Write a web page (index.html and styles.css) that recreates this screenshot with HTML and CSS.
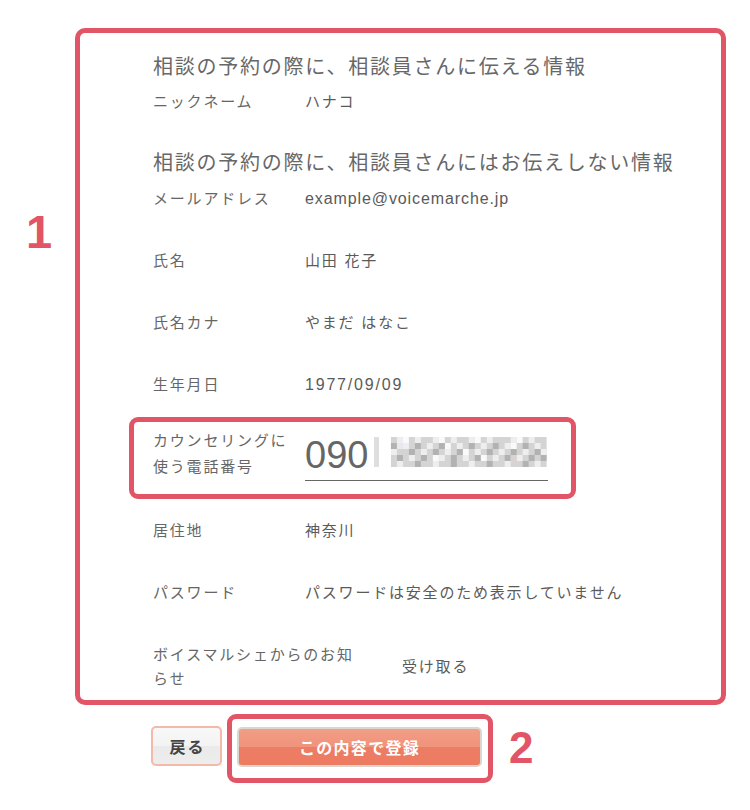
FILE: index.html
```html
<!DOCTYPE html>
<html lang="ja">
<head>
  <meta charset="UTF-8">
  <meta name="viewport" content="width=device-width, initial-scale=1.0">
  <title>登録内容の確認</title>
  <link rel="stylesheet" href="styles.css">
</head>
<body>
  <div class="page">
    <div class="review">
      <div class="marker marker-one">1</div>

      <div class="panel">
        <!-- 相談員さんに伝える情報 -->
        <section class="group">
          <h2 class="group-title">相談の予約の際に、相談員さんに伝える情報</h2>
          <div class="row">
            <div class="label">ニックネーム</div>
            <div class="value">ハナコ</div>
          </div>
        </section>

        <!-- 相談員さんには伝えない情報 -->
        <section class="group group-private">
          <h2 class="group-title">相談の予約の際に、相談員さんにはお伝えしない情報</h2>
          <div class="row">
            <div class="label">メールアドレス</div>
            <div class="value value-latin">example@voicemarche.jp</div>
          </div>
          <div class="row">
            <div class="label">氏名</div>
            <div class="value">山田 花子</div>
          </div>
          <div class="row">
            <div class="label">氏名カナ</div>
            <div class="value">やまだ はなこ</div>
          </div>
          <div class="row">
            <div class="label">生年月日</div>
            <div class="value value-latin value-date">1977/09/09</div>
          </div>
          <div class="row row-phone">
            <div class="label label-phone">カウンセリングに<br>使う電話番号</div>
            <div class="phone">
              <span class="phone-num">090</span>
              <svg class="mosaic" width="176" height="32" viewBox="0 0 176 32" aria-hidden="true">
                <rect x="2" y="1" width="5" height="30" fill="#dedede"/>
                <rect x="19" y="1" width="156" height="30" fill="#d4d4d4"/>
                <g fill="#eeeeee">
                  <rect x="25" y="1" width="6" height="6"/><rect x="43" y="1" width="6" height="6"/><rect x="61" y="1" width="6" height="6"/><rect x="79" y="1" width="6" height="6"/><rect x="97" y="1" width="6" height="6"/><rect x="115" y="1" width="6" height="6"/><rect x="139" y="1" width="6" height="6"/><rect x="157" y="1" width="6" height="6"/>
                  <rect x="31" y="7" width="6" height="6"/><rect x="55" y="7" width="6" height="6"/><rect x="85" y="7" width="6" height="6"/><rect x="109" y="7" width="6" height="6"/><rect x="133" y="7" width="6" height="6"/><rect x="163" y="7" width="6" height="6"/>
                  <rect x="19" y="13" width="6" height="6"/><rect x="49" y="13" width="6" height="6"/><rect x="73" y="13" width="6" height="6"/><rect x="103" y="13" width="6" height="6"/><rect x="127" y="13" width="6" height="6"/><rect x="151" y="13" width="6" height="6"/><rect x="169" y="13" width="6" height="6"/>
                  <rect x="37" y="19" width="6" height="6"/><rect x="67" y="19" width="6" height="6"/><rect x="91" y="19" width="6" height="6"/><rect x="121" y="19" width="6" height="6"/><rect x="145" y="19" width="6" height="6"/>
                  <rect x="25" y="25" width="6" height="6"/><rect x="61" y="25" width="6" height="6"/><rect x="97" y="25" width="6" height="6"/><rect x="133" y="25" width="6" height="6"/><rect x="163" y="25" width="6" height="6"/>
                </g>
                <g fill="#fafafa">
                  <rect x="31" y="1" width="6" height="6"/><rect x="67" y="1" width="6" height="6"/><rect x="103" y="1" width="6" height="6"/><rect x="145" y="1" width="6" height="6"/>
                  <rect x="73" y="7" width="6" height="6"/><rect x="139" y="7" width="6" height="6"/>
                  <rect x="91" y="13" width="6" height="6"/>
                  <rect x="61" y="19" width="6" height="6"/><rect x="109" y="19" width="6" height="6"/>
                </g>
                <g fill="#b2b2b2">
                  <rect x="19" y="7" width="6" height="6"/><rect x="43" y="7" width="6" height="6"/><rect x="67" y="7" width="6" height="6"/><rect x="97" y="7" width="6" height="6"/><rect x="121" y="7" width="6" height="6"/><rect x="151" y="7" width="6" height="6"/>
                  <rect x="37" y="13" width="6" height="6"/><rect x="61" y="13" width="6" height="6"/><rect x="85" y="13" width="6" height="6"/><rect x="115" y="13" width="6" height="6"/><rect x="139" y="13" width="6" height="6"/><rect x="163" y="13" width="6" height="6"/>
                  <rect x="25" y="19" width="6" height="6"/><rect x="49" y="19" width="6" height="6"/><rect x="79" y="19" width="6" height="6"/><rect x="103" y="19" width="6" height="6"/><rect x="133" y="19" width="6" height="6"/><rect x="157" y="19" width="6" height="6"/><rect x="169" y="19" width="6" height="6"/>
                  <rect x="43" y="25" width="6" height="6"/><rect x="79" y="25" width="6" height="6"/><rect x="115" y="25" width="6" height="6"/><rect x="151" y="25" width="6" height="6"/>
                </g>
                <rect x="25" y="7" width="6" height="6" fill="#e6e9f2"/>
                <rect x="139" y="19" width="6" height="6" fill="#dbd2cf"/>
              </svg>
            </div>
          </div>
          <div class="row">
            <div class="label">居住地</div>
            <div class="value">神奈川</div>
          </div>
          <div class="row">
            <div class="label">パスワード</div>
            <div class="value">パスワードは安全のため表示していません</div>
          </div>
          <div class="row row-notice">
            <div class="label label-wide">ボイスマルシェからのお知らせ</div>
            <div class="value">受け取る</div>
          </div>
        </section>
      </div>
    </div>

    <div class="actions">
      <button class="btn btn-back">戻る</button>
      <div class="submit-frame">
        <button class="btn btn-submit">この内容で登録</button>
      </div>
      <div class="marker marker-two">2</div>
    </div>
  </div>
</body>
</html>
```

FILE: styles.css
```css
/* General styles */
body {
  margin: 0;
  padding: 0;
  background: #fff;
  font-family: "Liberation Sans", "Noto Sans CJK JP", sans-serif;
  color: #666;
}

.page {
  padding-top: 28px;
}

.review {
  display: flex;
  align-items: flex-start;
}

/* Red annotation numbers */
.marker {
  font-family: "Liberation Sans", sans-serif;
  font-weight: bold;
  color: #e25566;
  line-height: 1;
}

.marker-one {
  width: 78px;
  text-align: center;
  font-size: 47px;
  padding-top: 180px;
}

.marker-two {
  font-size: 44px;
  margin: 12px 0 0 16px;
}

/* Confirmation panel */
.panel {
  box-sizing: border-box;
  width: 651px;
  margin-left: -3px;
  border: 5px solid #e25566;
  border-radius: 10px;
  padding: 19px 20px 9px 73px;
}

.group-title {
  margin: 0 0 8px;
  font-size: 20px;
  line-height: 30px;
  font-weight: normal;
  letter-spacing: 1.75px;
  color: #676767;
}

.group-private {
  margin-top: 34px;
}

.group-private .group-title {
  margin-bottom: 9px;
}

.row {
  display: flex;
  font-size: 15px;
  line-height: 24px;
  letter-spacing: 1.8px;
}

.row + .row {
  margin-top: 38px;
}

.row + .row-phone,
.row-phone + .row {
  margin-top: 20px;
}

.label {
  width: 152px;
  flex-shrink: 0;
  color: #666;
}

.value {
  color: #5a5a5a;
}

.value-latin {
  font-size: 16px;
  letter-spacing: 0.9px;
}

.value-date {
  letter-spacing: 1.8px;
}

/* Phone number row (highlighted) */
.row-phone {
  box-sizing: border-box;
  width: 447px;
  margin-left: -24px;
  border: 5px solid #e25566;
  border-radius: 9px;
  padding: 6px 0 13px 19px;
}

.label-phone {
  line-height: 26px;
}

.phone {
  display: flex;
  align-items: center;
  width: 243px;
  height: 52px;
  border-bottom: 1px solid #666;
}

.phone-num {
  font-size: 38px;
  line-height: 44px;
  letter-spacing: 0;
  color: #666;
  margin-top: 2px;
}

.mosaic {
  display: block;
  margin: 0 0 4px 4px;
}

/* Notice row */
.row-notice {
  align-items: center;
}

.label-wide {
  box-sizing: border-box;
  width: 249px;
  padding-right: 37px;
}

/* Buttons */
.actions {
  display: flex;
  align-items: flex-start;
  padding-left: 151px;
  margin-top: 9px;
}

.btn {
  font-family: "Liberation Sans", "Noto Sans CJK JP", sans-serif;
  font-weight: bold;
  font-size: 16px;
  cursor: pointer;
  padding: 0;
}

.btn-back {
  box-sizing: border-box;
  width: 71px;
  height: 40px;
  margin-top: 12px;
  border: 2px solid #f3b9a9;
  border-radius: 5px;
  background: linear-gradient(#f8f8f8 0%, #f3f3f3 50%, #eaeaea 51%, #ededed 100%);
  color: #444;
  letter-spacing: 2px;
  text-indent: 2px;
}

.submit-frame {
  box-sizing: border-box;
  width: 266px;
  height: 69px;
  margin-left: 5px;
  border: 5px solid #e25566;
  border-radius: 9px;
  padding: 8px 6px 11px 5px;
}

.btn-submit {
  box-sizing: border-box;
  width: 245px;
  height: 40px;
  border: 2px solid #dcd6d0;
  border-radius: 5px;
  background: linear-gradient(#f29d86 0%, #f0937b 50%, #ec7d64 51%, #ec7b62 100%);
  color: #fff;
  letter-spacing: 1.3px;
}

.btn-back:hover,
.btn-submit:hover {
  opacity: 0.9;
}
```
